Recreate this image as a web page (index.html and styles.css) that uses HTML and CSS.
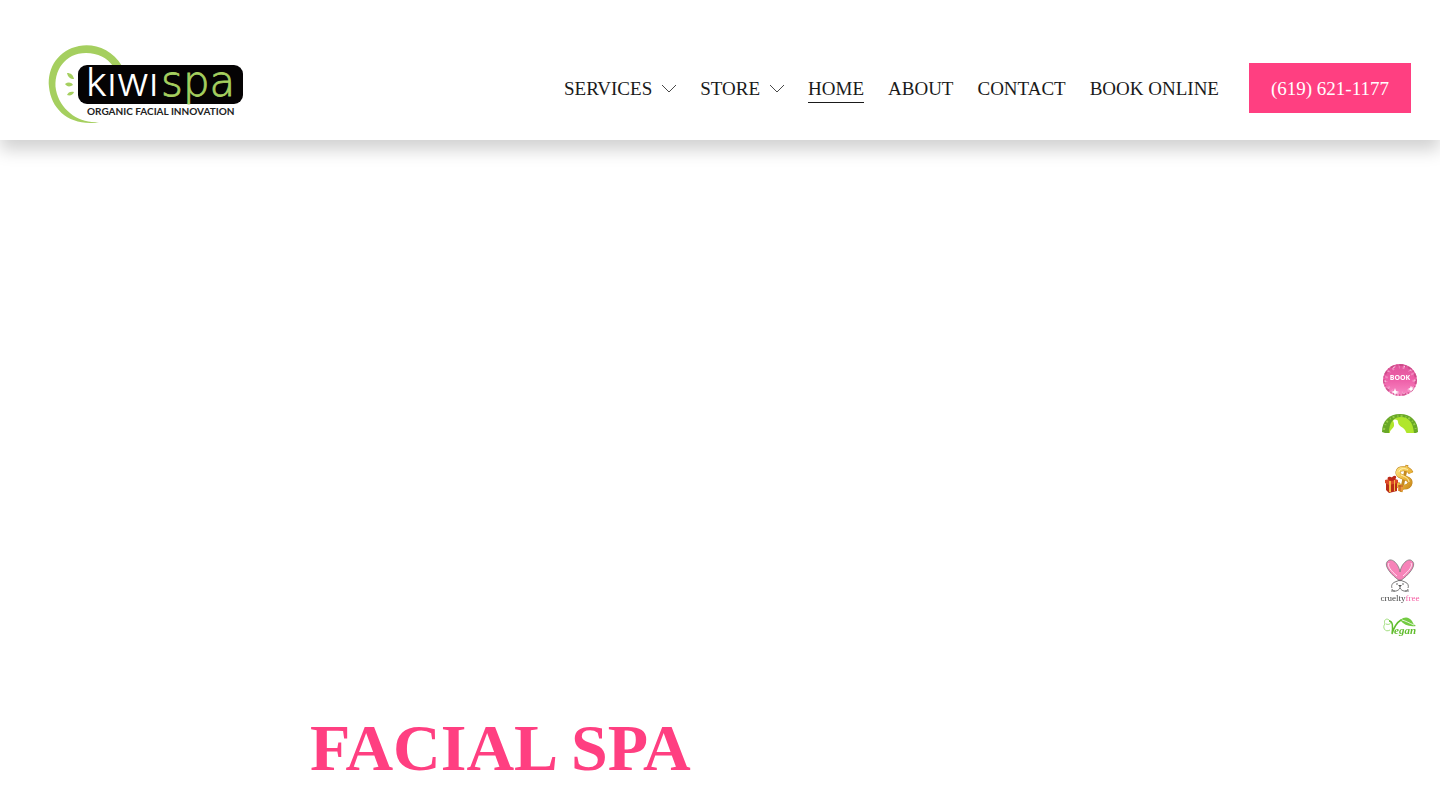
FILE: index.html
```
<!DOCTYPE html>
<html lang="en">
<head>
  <meta charset="UTF-8">
  <meta name="viewport" content="width=device-width, initial-scale=1">
  <title>Kiwi Spa</title>
  <link rel="stylesheet" href="styles.css">
</head>
<body>

  <header class="header">
    <a class="logo" href="#" aria-label="Kiwi Spa">
      <svg width="196" height="88" viewBox="0 0 196 88">
        <path fill="#a5cf5f" d="M74 22C64 5 46-1 31 2 11 6-1 23 1 43c2 21 18 36 41 36 4 0 7 0 9-1C31 80 12 66 8 46 5 27 17 9 38 9c12 0 21 5 27 13z"/>
        <g fill="#a5cf5f">
          <path d="M19 29c4 0 6 2 7 6-4 0-6-2-7-6z"/>
          <path d="M17 40c3-2 6-2 8 1-3 2-6 2-8-1z"/>
          <path d="M19 51c1-3 4-4 7-3-1 3-4 4-7 3z"/>
        </g>
        <rect x="30" y="21" width="165" height="39" rx="9" fill="#050304"/>
        <text class="logo-kiwi" x="38" y="52">kıwı</text>
        <text class="logo-spa" x="113" y="52">spa</text>
        <text class="logo-tag" x="39" y="71">ORGANIC FACIAL INNOVATION</text>
      </svg>
    </a>

    <nav class="nav">
      <a href="#">SERVICES
        <svg class="chevron" width="14" height="8" viewBox="0 0 14 8"><path d="M0 0 7 7 14 0"/></svg>
      </a>
      <a href="#">STORE
        <svg class="chevron" width="14" height="8" viewBox="0 0 14 8"><path d="M0 0 7 7 14 0"/></svg>
      </a>
      <a class="active" href="#">HOME</a>
      <a href="#">ABOUT</a>
      <a href="#">CONTACT</a>
      <a href="#">BOOK ONLINE</a>
      <a class="phone" href="tel:6196211177">(619) 621-1177</a>
    </nav>
  </header>

  <main class="hero">
    <h1>FACIAL SPA</h1>
  </main>

  <aside class="badges">
    <a href="#" aria-label="Book">
      <svg width="40" height="36" viewBox="0 0 40 36">
        <defs>
          <linearGradient id="pink" x2="0" y2="1"><stop offset="0" stop-color="#e0559c"/><stop offset=".5" stop-color="#ee5fa8"/><stop offset="1" stop-color="#f98cc6"/></linearGradient>
        </defs>
        <ellipse cx="20" cy="18" rx="17" ry="16" fill="url(#pink)"/>
        <ellipse cx="20" cy="18" rx="14" ry="13" fill="none" stroke="#f9a5d0" stroke-width="3" stroke-dasharray="2 5 1 3" opacity=".6"/>
        <ellipse cx="20" cy="18" rx="16" ry="15" fill="none" stroke="#c2447f" stroke-width="2" stroke-dasharray="4 2 1 2" opacity=".7"/>
        <ellipse cx="20" cy="18" rx="15" ry="14" fill="none" stroke="#ffe3f1" stroke-dasharray="1 6 2 9"/>
        <path fill="#fff" d="M15 26l1 3 3 1-3 1-1 3-1-3-3-1 3-1zM31 24l1 2 2 1-2 1-1 2-1-2-2-1 2-1z"/>
        <text class="badge-book" x="20" y="18" text-anchor="middle">BOOK</text>
      </svg>
    </a>
    <a class="store" href="#" aria-label="Store">
      <svg width="40" height="22" viewBox="0 0 40 22">
        <path fill="#69a827" d="M2 20C2 9 9 2 20 2s18 7 18 18l-2 1H5z"/>
        <path fill="none" stroke="#a9dc55" stroke-width="2" stroke-dasharray="2 3 1 2" d="M4 18C5 9 11 4 20 4s15 5 16 15" opacity=".7"/>
        <path fill="#b0e62c" d="M9 21C9 11 13 5 21 5s12 6 13 16z"/>
        <path fill="#fff" d="M13 9c1-2 5-2 5 1 0 4 5 5 7 8l2 4H10c-1-4 3-5 4-8 0-2 0-4-1-5z"/>
      </svg>
    </a>
    <a href="#" aria-label="Gift cards">
      <svg width="40" height="36" viewBox="0 0 40 36">
        <defs>
          <linearGradient id="gold" x2="1" y2="1"><stop offset="0" stop-color="#fbe07a"/><stop offset=".5" stop-color="#eeb93f"/><stop offset="1" stop-color="#c98a1c"/></linearGradient>
        </defs>
        <g fill="none">
          <path stroke="#bd821c" stroke-width="5" d="M31 11c-2-5-12-6-13-1-1 6 13 5 12 11-1 5-11 6-13 0"/>
          <path stroke="#c58a20" stroke-width="3" d="M27 3 21 30"/>
          <path stroke="url(#gold)" stroke-width="4" d="M31 11c-2-5-12-6-13-1-1 6 13 5 12 11-1 5-11 6-13 0"/>
          <path stroke="#f3c957" stroke-width="2" d="M27 4 25 8M22 25l-1 4"/>
          <path stroke="#fff1ae" d="M28 8c-4-3-9-1-9 2M21 13c5 2 8 4 8 7"/>
        </g>
        <path fill="#b92b17" d="M6 20l11-1v10l-8 2-3-3z"/>
        <path fill="#db4a28" d="M5 18l8-2 5 2v3l-9 2-4-2z"/>
        <path fill="#f6bb46" d="M9 19l2 0 0 11-2 0zM14 18h1v11h-1z"/>
        <path fill="#e9983c" d="M18 23h5v6h-5z"/>
        <path fill="none" stroke="#bb2918" stroke-width="2" d="M12 18c-6-1-3-4 0-1 2-4 6-2 0 1"/>
        <path fill="none" stroke="#b85320" d="M18 24h5M20 23v6"/>
      </svg>
    </a>
    <a class="cruelty" href="#" aria-label="Cruelty free">
      <svg width="40" height="46" viewBox="0 0 40 46">
        <path fill="#f783b9" stroke="#777" stroke-width=".8" d="M20 23C11 17 4 8 7 4c4-6 12 2 13 10C21 6 29-2 33 4c3 4-4 13-13 19z"/>
        <path fill="none" stroke="#fff" stroke-width=".8" d="M17 18C11 13 7 8 9 5M23 18c6-5 10-10 8-13"/>
        <g fill="none" stroke="#555" stroke-width=".8">
          <path d="M15 24c-3 1-4 4-3 6M25 24c3 1 4 4 3 6M20 28v2M20 30c-2 4-8 4-8 1M20 30c2 4 8 4 8 1M11 33h4M25 33h4M15 24l5-2 5 2"/>
        </g>
        <g fill="#555"><circle cx="17" cy="26" r=".8"/><circle cx="23" cy="26" r=".8"/><path d="M18 27h4l-2 2z"/></g>
        <text class="badge-cruelty" x="20" y="43" text-anchor="middle">cruelty<tspan fill="#f65fa4">free</tspan></text>
      </svg>
    </a>
    <a href="#" aria-label="Vegan">
      <svg width="40" height="24" viewBox="0 0 40 24">
        <path fill="none" stroke="#8ad65f" stroke-width=".8" d="M10 5C7 1 3 4 5 8c-3 3 0 9 5 6M6 8c3 1 5 0 5-3"/>
        <path fill="#73cb42" d="M20 4c5-4 9-3 12 1 1 2 2 4 4 5-7 1-12-1-16-6z"/>
        <path fill="none" stroke="#fff" stroke-width=".8" d="M22 4c4 1 7 3 12 5"/>
        <path fill="none" stroke="#61bd2d" stroke-width="1.5" d="M9 5c4 0 4 6 3 13 2-7 4-11 9-14"/>
        <text class="badge-vegan" x="14" y="18">egan</text>
      </svg>
    </a>
  </aside>

</body>
</html>
```
FILE: styles.css
```
* {
  box-sizing: border-box;
}
body {
  margin: 0;
  font-family: "Liberation Serif", "Times New Roman", serif;
  background: #fff;
  color: #1a1a1a;
}
a {
  color: inherit;
  text-decoration: none;
}
svg {
  display: block;
  overflow: visible;
}
.header {
  display: flex;
  align-items: center;
  justify-content: space-between;
  height: 140px;
  padding: 36px 29px 0 48px;
  box-shadow: 0 10px 16px 0 rgba(0, 0, 0, 0.18);
}
.logo-kiwi {
  font: 300 40px Inter, sans-serif;
  fill: #fff;
}
.logo-spa {
  font: 200 42px "DejaVu Sans", sans-serif;
  fill: #a5cf5f;
  stroke: #a5cf5f;
  stroke-width: 0.8;
}
.logo-tag {
  font: 700 10px Lato, sans-serif;
  fill: #222;
}
.nav {
  display: flex;
  align-items: center;
  gap: 24px;
  font-size: 19px;
  line-height: 26px;
}
.nav a {
  display: flex;
  align-items: center;
  gap: 10px;
  padding-top: 2px;
  border-bottom: 1px solid transparent;
}
.nav .active {
  border-bottom-color: #1a1a1a;
}
.chevron {
  fill: none;
  stroke: #1a1a1a;
  stroke-width: 0.8;
}
.nav .phone {
  margin-left: 6px;
  padding: 13px 22px 11px;
  border: 0;
  background: #ff3f81;
  color: #fff;
}
.hero {
  max-width: 820px;
  margin: 0 auto;
  padding-top: 568px;
}
.hero h1 {
  margin: 0;
  font-size: 66px;
  line-height: 80px;
  color: #ff3f81;
}
/* floating badges on the right edge */
.badges {
  position: fixed;
  top: 362px;
  right: 20px;
  display: flex;
  flex-direction: column;
}
.badges a {
  margin-bottom: 14px;
}
.badges .store {
  margin-bottom: 28px;
}
.badges .cruelty {
  margin-top: 46px;
  margin-bottom: 12px;
}
.badge-book {
  font: 700 7px "Open Sans", sans-serif;
  fill: #fff;
}
.badge-cruelty {
  font: 9px "Liberation Serif", serif;
  fill: #444;
}
.badge-vegan {
  font: italic 700 11px "Liberation Serif", serif;
  fill: #61bd2d;
}
```
